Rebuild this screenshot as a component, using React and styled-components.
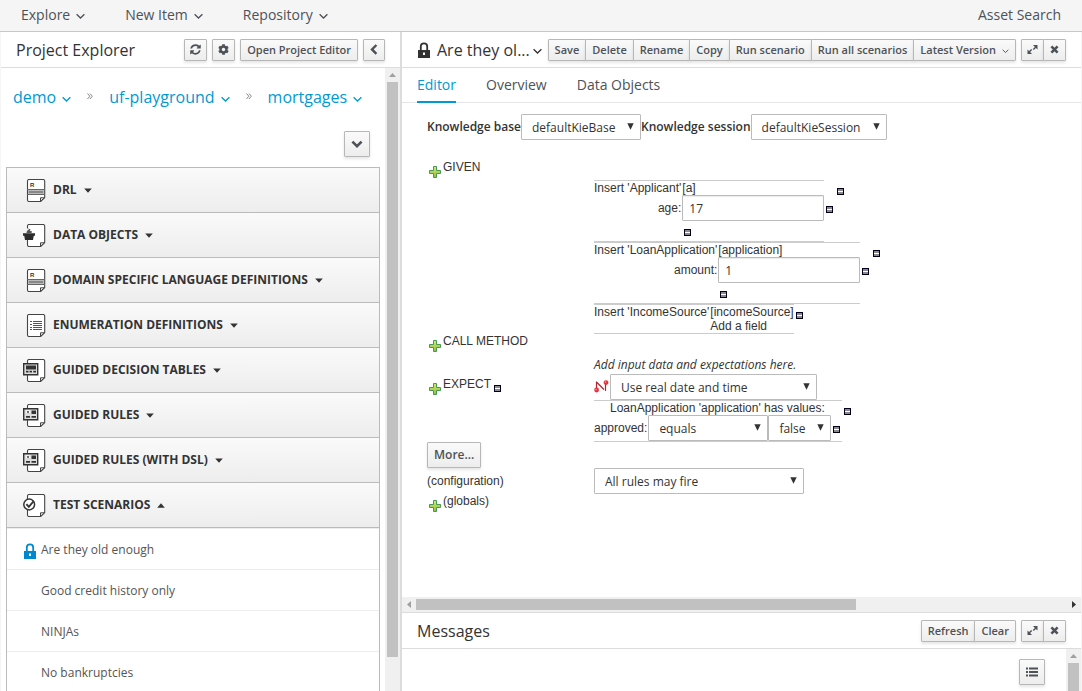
// Workbench screen: project explorer, scenario editor and messages

import React, { useState } from 'react';
import styled, { createGlobalStyle } from 'styled-components';
import { FaCog } from 'react-icons/fa';

const GlobalStyle = createGlobalStyle`
  * {
    box-sizing: border-box;
  }

  body {
    margin: 0;
    background: #f5f5f5;
    color: #333;
    font-family: 'Open Sans', sans-serif;
    font-size: 12px;
    line-height: 20px;
  }

  button, input, select {
    font-family: inherit;
    margin: 0;
  }

  svg {
    display: block;
    flex-shrink: 0;
  }
`;

const Page = styled.div`
  display: flex;
  flex-direction: column;
  height: 100vh;
  overflow: hidden;
`;

const NavBar = styled.nav`
  display: flex;
  flex-shrink: 0;
  gap: 40px;
  height: 32px;
  padding: 0 21px 2px;
  border-bottom: 1px solid #c7c7c7;
`;

const NavItem = styled.button`
  display: flex;
  align-items: center;
  gap: 6px;
  padding: 0;
  border: none;
  background: none;
  color: #4d5258;
  font-size: 14px;
  cursor: pointer;
`;

const NavLink = styled.a`
  margin-left: auto;
  color: #4d5258;
  font-size: 14px;
  line-height: 30px;
  text-decoration: none;
`;

const Workspace = styled.div`
  display: flex;
  flex: 1;
  min-height: 0;
  margin: 0 1px;
  background: #fff;
`;

const Explorer = styled.aside`
  display: flex;
  flex-direction: column;
  width: 399px;
  flex-shrink: 0;
`;

const Main = styled.main`
  display: flex;
  flex: 1;
  flex-direction: column;
  min-width: 0;
  border-left: 2px solid #dcdcdc;
`;

const PanelHeader = styled.header`
  display: flex;
  align-items: center;
  flex-shrink: 0;
  gap: 5px;
  height: 36px;
  padding: 0 15px;
  border-bottom: 1px solid #dcdcdc;
`;

const PanelTitle = styled.h1`
  margin: 0 auto 0 0;
  font-size: 16px;
  font-weight: 400;
  white-space: nowrap;
`;

const TitleButton = styled.button`
  display: flex;
  align-items: center;
  gap: 3px;
  padding: 0;
  border: none;
  background: none;
  color: inherit;
  font-size: 16px;
`;

const Button = styled.button`
  display: flex;
  align-items: center;
  justify-content: center;
  gap: 6px;
  height: ${props => props.$large ? '26px' : '22px'};
  min-width: ${props => props.$large ? '26px' : '22px'};
  padding: 0 ${props => props.$icon ? '5px' : '6px'};
  border: 1px solid #b7b7b7;
  border-radius: 1px;
  background: linear-gradient(#fafafa, #ededed);
  box-shadow: 0 2px 3px rgba(3, 3, 3, 0.1);
  color: #4d5258;
  font-size: ${props => props.$large ? '12px' : '11px'};
  font-weight: 600;
  line-height: 16px;
  white-space: nowrap;
  cursor: pointer;

  &:hover {
    background: #f1f1f1;
  }
`;

const ButtonGroup = styled.div`
  display: flex;

  ${Button} + ${Button} {
    margin-left: -1px;
  }
`;

const PanelBody = styled.div`
  display: flex;
  flex: 1;
  min-height: 0;
`;

const ExplorerContent = styled.div`
  flex: 1;
  min-width: 0;
  overflow: hidden;
  padding: 0 5px;
`;

const ScrollTrack = styled.div`
  display: flex;
  flex-direction: ${props => props.$horizontal ? 'row' : 'column'};
  align-items: center;
  flex-shrink: 0;
  ${props => props.$horizontal ? 'height: 15px;' : 'width: 15px;'}
  background: #f0f0f0;
`;

const ScrollArrow = styled.span`
  display: flex;
  align-items: center;
  justify-content: center;
  flex-shrink: 0;
  width: 14px;
  height: 14px;
`;

const ScrollThumb = styled.span`
  ${props => props.$horizontal ? 'width' : 'height'}: ${props => props.$size};
  ${props => props.$horizontal ? 'height' : 'width'}: 11px;
  background: #c1c1c1;
`;

const ScrollSpacer = styled.span`
  flex: 1;
`;

const Breadcrumb = styled.nav`
  display: flex;
  align-items: center;
  gap: 16px;
  height: 58px;
  padding: 0 7px;
`;

const Crumb = styled.button`
  display: flex;
  align-items: center;
  gap: 6px;
  padding: 0;
  border: none;
  background: none;
  color: #0099d3;
  font-size: 16px;
  cursor: pointer;
`;

const ExplorerTools = styled.div`
  display: flex;
  justify-content: flex-end;
  padding: 5px 10px 10px;
`;

const Accordion = styled.div`
  border: 1px solid #bbb;
`;

const GroupHeader = styled.button`
  display: flex;
  align-items: center;
  gap: 7px;
  width: 100%;
  height: ${props => props.$first ? '44px' : '45px'};
  padding: 0 16px;
  border: none;
  border-top: ${props => props.$first ? 'none' : '1px solid #bbb'};
  background: linear-gradient(#fafafa, #ededed);
  color: #333;
  font-size: 12px;
  font-weight: 700;
  text-align: left;
  cursor: pointer;
`;

const GroupLabel = styled.span`
  padding-bottom: 2px;
`;

const FileList = styled.ul`
  margin: 0;
  padding: 0;
  border-top: 1px solid #bbb;
  list-style: none;
`;

const FileItem = styled.li`
  border-top: 1px solid #ededed;
`;

const FileLink = styled.a`
  display: flex;
  align-items: center;
  gap: 4px;
  height: 40px;
  padding: 2px 16px 0;
  color: #555;
  text-decoration: none;
`;

const LockSlot = styled.span`
  width: 14px;
  padding: 2px 1px 0;
  color: #0088ce;
`;

const TitleLock = styled.span`
  padding: 0 2px 0 1px;
`;

const Tabs = styled.div`
  display: flex;
  flex-shrink: 0;
  gap: 30px;
  height: 35px;
  padding: 0 15px;
  border-bottom: 1px solid #e5e5e5;
`;

const Tab = styled.button`
  height: 35px;
  padding: 0;
  border: none;
  border-bottom: 2px solid ${props => props.$active ? '#0099d3' : 'transparent'};
  background: none;
  color: ${props => props.$active ? '#0099d3' : '#4d5258'};
  font-size: 14px;
  cursor: pointer;
`;

const EditorArea = styled.div`
  flex: 1;
  min-height: 0;
  overflow: hidden;
  padding: 11px 25px;
`;

const KnowledgeBar = styled.div`
  display: flex;
  margin-bottom: 20px;
`;

const KnowledgeLabel = styled.label`
  font-weight: 600;
  line-height: 26px;
`;

const SelectBox = styled.span`
  position: relative;
  display: inline-flex;
  width: ${props => props.$width};

  svg {
    position: absolute;
    top: 9px;
    right: 6px;
    pointer-events: none;
  }
`;

const NativeSelect = styled.select`
  width: 100%;
  height: 26px;
  padding: 0 10px;
  border: 1px solid #bbb;
  border-radius: 1px;
  background: #fff;
  color: #333;
  font-size: 12px;
  appearance: none;
`;

const TextInput = styled.input`
  width: 142px;
  height: 26px;
  padding: 0 6px;
  border: 1px solid #bbb;
  border-radius: 1px;
  box-shadow: inset 0 1px 1px rgba(3, 3, 3, 0.08);
  color: #333;
  font-size: 12px;
`;

const ScenarioGrid = styled.div`
  display: grid;
  grid-template-columns: 167px auto;
  align-items: start;
  font-family: 'Liberation Sans', Arial, sans-serif;
  line-height: 14px;

  select, input, button {
    font-family: 'Open Sans', sans-serif;
  }
`;

const StepLabel = styled.div`
  display: flex;
  gap: 2px;
  min-height: ${props => props.$tall ? '24px' : '14px'};
  padding: ${props => props.$lowered ? '3px 0 0 2px' : '0 0 0 2px'};
`;

const IconButton = styled.button`
  display: inline-flex;
  align-self: flex-start;
  padding: 0;
  margin: ${props => props.$margin || '0'};
  border: none;
  background: none;
  cursor: pointer;
`;

const ConfigLabel = styled.label`
  align-self: center;
`;

const FactList = styled.div`
  padding-top: 20px;
`;

const FactBlock = styled.div`
  display: flex;
`;

const FactBody = styled.div`
  display: grid;
  grid-template-columns: auto auto;
  border: solid #ccc;
  border-width: 1px 0;
`;

const FieldLabel = styled.label`
  padding-right: 1px;
  text-align: right;
  line-height: ${props => props.$row ? '26px' : '14px'};
`;

const FieldFooter = styled.div`
  display: flex;
  grid-column: 2;
  height: 20px;
  padding: 8px 2px 0;
`;

const Hint = styled.em`
  grid-column: 2;
  font-family: 'Open Sans', sans-serif;
  font-size: 12px;
  line-height: 14px;
  padding-bottom: 2px;
`;

const Inline = styled.div`
  display: flex;
`;

const CallIcon = styled.span`
  width: 16px;
  padding-top: 6px;
`;

const ExpectBody = styled.div`
  width: 248px;
  border: solid #ccc;
  border-width: 1px 0;
`;

const ExpectTitle = styled.div`
  padding-left: 16px;
`;

const MessagesBody = styled.div`
  flex: 1;
  display: flex;
  justify-content: flex-end;
  align-items: flex-start;
  padding: 10px 21px;
`;

const MessagesPanel = styled.section`
  display: flex;
  flex-direction: column;
  flex-shrink: 0;
  height: 79px;
  border-top: 1px solid #dcdcdc;
`;

const Caret = ({ small }) => (
  <svg width={small ? 7 : 9} height={small ? 8 : 11} viewBox="0 0 9 11" fill="none" stroke="currentColor" strokeWidth="1.3">
    <path d="M.6 5.2 4.5 9l3.9-3.8" />
  </svg>
);

const Triangle = ({ up }) => (
  <svg width="8" height="5" viewBox="0 0 8 5">
    <path d={up ? 'M.2 4.7h7.6L4 .3z' : 'M.2.5h7.6L4 4.8z'} fill="currentColor" />
  </svg>
);

const CrumbDivider = () => (
  <svg width="6" height="9" viewBox="0 0 6 9" fill="none" stroke="#888" strokeWidth="1">
    <path d="M.5.5l2.3 2.7L.5 6M3 .5l2.3 2.7L3 6" />
  </svg>
);

const LockIcon = () => (
  <svg width="12" height="16" viewBox="0 0 12 16">
    <path d="M2.8 8V4.5a3.2 3.2 0 0 1 6.4 0V8" fill="none" stroke="currentColor" strokeWidth="1.8" />
    <path d="M0 8h12v8H0z" fill="currentColor" />
    <path d="M5 10.5h2v2.5H5z" fill="#fff" />
  </svg>
);

const RefreshIcon = () => (
  <svg width="11" height="11" viewBox="100 100 1600 1600" fill="currentColor">
    <path d="M1639 1056q0 5-1 7-64 268-268 434.5t-478.5 166.5q-146 0-282.5-55t-243.5-157l-129 129q-19 19-45 19t-45-19-19-45v-448q0-26 19-45t45-19h448q26 0 45 19t19 45-19 45l-137 137q71 66 161 102t187 36q134 0 250-65t186-179q11-17 53-117 8-23 30-23h192q13 0 22.5 9.5t9.5 22.5zm25-800v448q0 26-19 45t-45 19h-448q-26 0-45-19t-19-45 19-45l138-138q-148-137-349-137-134 0-250 65t-186 179q-11 17-53 117-8 23-30 23h-199q-13 0-22.5-9.5t-9.5-22.5v-7q65-268 270-434.5t480-166.5q146 0 284 55.5t245 156.5l130-129q19-19 45-19t45 19 19 45z" />
  </svg>
);

const ChevronLeftIcon = () => (
  <svg width="10" height="11" viewBox="0 0 10 11" fill="none" stroke="currentColor" strokeWidth="2.4">
    <path d="M7.4 1L3 5.4l4.4 4.4" />
  </svg>
);

const ChevronDownIcon = () => (
  <svg width="12" height="10" viewBox="0 0 12 10" fill="none" stroke="currentColor" strokeWidth="2.6">
    <path d="M1.4 2.6L6 7.2l4.6-4.6" />
  </svg>
);

const ListIcon = () => (
  <svg width="12" height="10" viewBox="0 0 12 10" stroke="currentColor" strokeWidth="1.9">
    <path d="M0 1.5h2M0 5h2M0 8.5h2M3 1.5h9M3 5h9M3 8.5h9" />
  </svg>
);

const ExpandIcon = () => (
  <svg width="11" height="11" viewBox="0 0 11 11" fill="currentColor">
    <path d="M6 1h4.5v4.5L8.9 3.9 6.8 6l-1-1 2.1-2.1zM5 10H.5V5.5l1.6 1.6L4.2 5l1 1-2.1 2.1z" />
  </svg>
);

const CloseIcon = () => (
  <svg width="11" height="9" viewBox="0 0 11 9" fill="none" stroke="currentColor" strokeWidth="2.6">
    <path d="M2.4 1.4l6.2 6.2M8.6 1.4L2.4 7.6" />
  </svg>
);

const SelectArrow = () => (
  <svg width="8" height="7" viewBox="0 0 8 7">
    <path d="M.3.3h6.4L3.5 6.8z" fill="#333" />
  </svg>
);

const PlusIcon = () => (
  <svg width="12" height="12" viewBox="0 0 12 12">
    <defs>
      <linearGradient id="plusFill" x1="0" y1="0" x2="0" y2="1">
        <stop offset="0" stopColor="#dbe86a" />
        <stop offset="1" stopColor="#8cbf3a" />
      </linearGradient>
    </defs>
    <path d="M4.5.5h3v4h4v3h-4v4h-3v-4h-4v-3h4z" fill="url(#plusFill)" stroke="#459a5b" />
  </svg>
);

const MinusIcon = () => (
  <svg width="7" height="7" viewBox="0 0 7 7" shapeRendering="crispEdges">
    <path d="M0 0h7v7H0z" fill="#00001c" />
    <path d="M1 1h5v5H1z" fill="#8a8a8a" />
    <path d="M1 3h5v1H1z" fill="#fff" />
  </svg>
);

const CallMethodIcon = () => (
  <svg width="15" height="13" viewBox="0 0 15 13">
    <path d="M2.5 10V1.5M3 2.5L10 9.5M11.5 11V3" fill="none" stroke="#b8222c" strokeWidth="1.2" />
    <circle cx="2.6" cy="10" r="2.4" fill="#e8323c" />
    <circle cx="12" cy="2.6" r="2.4" fill="#e8323c" />
    <circle cx="2.1" cy="9.5" r=".8" fill="#f79aa0" />
    <circle cx="11.5" cy="2.1" r=".8" fill="#f79aa0" />
  </svg>
);

const docDetails = {
  rule: (
    <>
      <text x="7" y="8" fontSize="6" fill="#333" fontFamily="Liberation Sans, sans-serif">R</text>
      <path d="M5 10h16v6H5z" fill="#bbb" />
      <path d="M4 10.5h18M4 15.5h18" stroke="#666" />
      <path d="M6 13h14" stroke="#888" strokeWidth="2" />
    </>
  ),
  data: (
    <>
      <path d="M3 5v10h3V4z" fill="#f7f7f7" />
      <path d="M1 10.5h10l-1 5.5H2zM0 9.2h12v2.6H0z" fill="#2b2b2b" />
      <path d="M3.5 9c0-2 1-3 2.5-3.2L5 4.5l2.5.7L7 7l2 .2L8.5 9z" fill="#555" />
    </>
  ),
  list: (
    <path
      d="M7 7.5h2M7 10.5h2M7 13.5h2M7 15.5h2M10 7.5h9M10 9.5h9M10 11.5h9M10 13.5h9M10 15.5h9"
      stroke="#555"
    />
  ),
  table: (
    <>
      <path d="M.7 4.7h14v11H.7z" fill="#ddd" stroke="#333" strokeWidth="1.4" />
      <path d="M3 6.5h10v4H3zM3 11.8h2.5v1.7H3zM6.5 11.8H9v1.7H6.5zM10.2 11.8H13v1.7h-2.8z" fill="#333" />
    </>
  ),
  guided: (
    <>
      <path d="M.7 4.7h14v11H.7z" fill="#ddd" stroke="#333" strokeWidth="1.4" />
      <path d="M8.5 6.5H13V10H8.5zM3 12h4v1.7H3zM8.5 12H13v1.7H8.5z" fill="#333" />
      <path d="M3 6.5h4V10H3z" fill="#fff" />
      <path d="M4 7l2 2.5M6 7L4 9.5" stroke="#333" strokeWidth=".8" />
    </>
  ),
  test: (
    <>
      <circle cx="6.2" cy="10.5" r="5.4" fill="#fff" stroke="#333" strokeWidth="1.5" />
      <path d="M3.4 10.2l2.4 2.6 5-5.8" fill="none" stroke="#333" strokeWidth="1.9" />
    </>
  )
};

const DocIcon = ({ type }) => (
  <svg width="23" height="23" viewBox="0 0 23 23">
    <path
      d="M4.5 2q0-1.5 1.5-1.5h14q1.7 0 1.7 1.5v16.5l-4 4H6q-1.5 0-1.5-1.5z"
      fill="#fff"
      stroke="#444"
      strokeWidth="1.1"
    />
    <path d="M17.5 22.3v-3.5h4z" fill="#eee" stroke="#444" />
    {docDetails[type]}
  </svg>
);

const Select = ({ id, label, width, value }) => (
  <SelectBox $width={width}>
    <NativeSelect id={id} aria-label={label} defaultValue={value}>
      <option value={value}>{value}</option>
    </NativeSelect>
    <SelectArrow />
  </SelectBox>
);

const RemoveButton = ({ margin }) => (
  <IconButton $margin={margin} aria-label="Remove">
    <MinusIcon />
  </IconButton>
);

const AddButton = () => (
  <IconButton $margin="6px 0 0" aria-label="Add">
    <PlusIcon />
  </IconButton>
);

const Fact = ({ type, name, field, value }) => (
  <FactBlock>
    <FactBody>
      <FieldLabel as="span">Insert '{type}'</FieldLabel>
      <span>[{name}]</span>
      <FieldLabel htmlFor={field} $row>{field}:</FieldLabel>
      <TextInput id={field} defaultValue={value} />
      <FieldFooter>
        <RemoveButton />
      </FieldFooter>
    </FactBody>
    <RemoveButton margin="26px 4px 0 2px" />
    <RemoveButton margin="8px 0 0" />
  </FactBlock>
);

const groups = [
  { label: 'DRL', icon: 'rule' },
  { label: 'DATA OBJECTS', icon: 'data' },
  { label: 'DOMAIN SPECIFIC LANGUAGE DEFINITIONS', icon: 'rule' },
  { label: 'ENUMERATION DEFINITIONS', icon: 'list' },
  { label: 'GUIDED DECISION TABLES', icon: 'table' },
  { label: 'GUIDED RULES', icon: 'guided' },
  { label: 'GUIDED RULES (WITH DSL)', icon: 'guided' },
  { label: 'TEST SCENARIOS', icon: 'test', open: true }
];

const scenarios = [
  { name: 'Are they old enough', locked: true },
  { name: 'Good credit history only' },
  { name: 'NINJAs' },
  { name: 'No bankruptcies' }
];

const actions = ['Save', 'Delete', 'Rename', 'Copy', 'Run scenario', 'Run all scenarios'];

const WindowButtons = () => (
  <ButtonGroup>
    <Button $icon aria-label="Maximize"><ExpandIcon /></Button>
    <Button $icon aria-label="Close"><CloseIcon /></Button>
  </ButtonGroup>
);

const ProjectExplorer = () => (
  <Explorer>
    <PanelHeader>
      <PanelTitle>Project Explorer</PanelTitle>
      <Button $icon aria-label="Refresh"><RefreshIcon /></Button>
      <Button $icon aria-label="Customize view"><FaCog size={11} /></Button>
      <Button>Open Project Editor</Button>
      <Button $icon aria-label="Collapse"><ChevronLeftIcon /></Button>
    </PanelHeader>
    <PanelBody>
      <ExplorerContent>
        <Breadcrumb>
          <Crumb>demo <Caret /></Crumb>
          <CrumbDivider />
          <Crumb>uf-playground <Caret /></Crumb>
          <CrumbDivider />
          <Crumb>mortgages <Caret /></Crumb>
        </Breadcrumb>
        <ExplorerTools>
          <Button $large $icon aria-label="Toggle"><ChevronDownIcon /></Button>
        </ExplorerTools>
        <Accordion>
          {groups.map((group, i) => (
            <GroupHeader key={group.label} $first={i === 0}>
              <DocIcon type={group.icon} />
              <GroupLabel>{group.label}</GroupLabel>
              <Triangle up={group.open} />
            </GroupHeader>
          ))}
          <FileList>
            {scenarios.map(item => (
              <FileItem key={item.name}>
                <FileLink href="#">
                  <LockSlot>{item.locked && <LockIcon />}</LockSlot>
                  {item.name}
                </FileLink>
              </FileItem>
            ))}
          </FileList>
        </Accordion>
      </ExplorerContent>
      <ScrollTrack>
        <ScrollArrow>
          <svg width="7" height="4" viewBox="0 0 7 4"><path d="M0 4h7L3.5 0z" fill="#a0a0a0" /></svg>
        </ScrollArrow>
        <ScrollThumb $size="calc(100% - 48px)" />
      </ScrollTrack>
    </PanelBody>
  </Explorer>
);

const ScenarioEditor = () => (
  <EditorArea>
    <KnowledgeBar>
      <KnowledgeLabel htmlFor="kbase">Knowledge base</KnowledgeLabel>
      <Select id="kbase" width="120px" value="defaultKieBase" />
      <KnowledgeLabel htmlFor="ksession">Knowledge session</KnowledgeLabel>
      <Select id="ksession" width="136px" value="defaultKieSession" />
    </KnowledgeBar>
    <ScenarioGrid>
      <StepLabel><AddButton />GIVEN</StepLabel>
      <FactList>
        <Fact type="Applicant" name="a" field="age" value="17" />
        <Fact type="LoanApplication" name="application" field="amount" value="1" />
        <FactBlock>
          <FactBody>
            <FieldLabel as="span">Insert 'IncomeSource'</FieldLabel>
            <span>[incomeSource]</span>
            <span />
            <span>Add a field</span>
          </FactBody>
          <RemoveButton margin="8px 0 0 2px" />
        </FactBlock>
      </FactList>

      <StepLabel $tall><AddButton />CALL METHOD</StepLabel>
      <span />

      <Hint>Add input data and expectations here.</Hint>

      <StepLabel $lowered>
        <AddButton />EXPECT
        <RemoveButton margin="8px 0 0 1px" />
      </StepLabel>
      <div>
        <Inline>
          <CallIcon><CallMethodIcon /></CallIcon>
          <Select label="Date and time" width="207px" value="Use real date and time" />
        </Inline>
        <FactBlock>
          <ExpectBody>
            <ExpectTitle>LoanApplication 'application' has values:</ExpectTitle>
            <Inline>
              <FieldLabel htmlFor="approved" $row>approved:</FieldLabel>
              <Select id="approved" width="120px" value="equals" />
              <Select label="Expected value" width="63px" value="false" />
              <RemoveButton margin="11px 0 0 2px" />
            </Inline>
          </ExpectBody>
          <RemoveButton margin="8px 0 0 2px" />
        </FactBlock>
      </div>

      <Inline><Button $large>More...</Button></Inline>
      <span />

      <ConfigLabel htmlFor="rules">(configuration)</ConfigLabel>
      <Select id="rules" width="210px" value="All rules may fire" />

      <StepLabel><AddButton />(globals)</StepLabel>
    </ScenarioGrid>
  </EditorArea>
);

const App = () => {
  const [activeTab, setActiveTab] = useState('Editor');

  return (
    <>
      <GlobalStyle />
      <Page>
        <NavBar>
          <NavItem>Explore <Caret /></NavItem>
          <NavItem>New Item <Caret /></NavItem>
          <NavItem>Repository <Caret /></NavItem>
          <NavLink href="#">Asset Search</NavLink>
        </NavBar>
        <Workspace>
          <ProjectExplorer />
          <Main>
            <PanelHeader>
              <TitleLock><LockIcon /></TitleLock>
              <PanelTitle>
                <TitleButton>Are they ol... <Caret /></TitleButton>
              </PanelTitle>
              <ButtonGroup>
                {actions.map(action => <Button key={action}>{action}</Button>)}
                <Button>Latest Version <Caret small /></Button>
              </ButtonGroup>
              <WindowButtons />
            </PanelHeader>
            <Tabs>
              {['Editor', 'Overview', 'Data Objects'].map(tab => (
                <Tab key={tab} $active={tab === activeTab} onClick={() => setActiveTab(tab)}>
                  {tab}
                </Tab>
              ))}
            </Tabs>
            <ScenarioEditor />
            <ScrollTrack $horizontal>
              <ScrollArrow>
                <svg width="4" height="7" viewBox="0 0 4 7"><path d="M4 0v7L0 3.5z" fill="#a0a0a0" /></svg>
              </ScrollArrow>
              <ScrollThumb $horizontal $size="calc(65% - 1px)" />
              <ScrollSpacer />
              <ScrollArrow>
                <svg width="4" height="7" viewBox="0 0 4 7"><path d="M0 0v7l4-3.5z" fill="#333" /></svg>
              </ScrollArrow>
            </ScrollTrack>
            <MessagesPanel>
              <PanelHeader>
                <PanelTitle as="h2">Messages</PanelTitle>
                <ButtonGroup>
                  <Button>Refresh</Button>
                  <Button>Clear</Button>
                </ButtonGroup>
                <WindowButtons />
              </PanelHeader>
              <PanelBody>
                <MessagesBody>
                  <Button $large $icon aria-label="Message list"><ListIcon /></Button>
                </MessagesBody>
                <ScrollTrack>
                  <ScrollArrow>
                    <svg width="7" height="4" viewBox="0 0 7 4"><path d="M0 4h7L3.5 0z" fill="#a0a0a0" /></svg>
                  </ScrollArrow>
                  <ScrollThumb $size="100%" />
                </ScrollTrack>
              </PanelBody>
            </MessagesPanel>
          </Main>
        </Workspace>
      </Page>
    </>
  );
};

export default App;
